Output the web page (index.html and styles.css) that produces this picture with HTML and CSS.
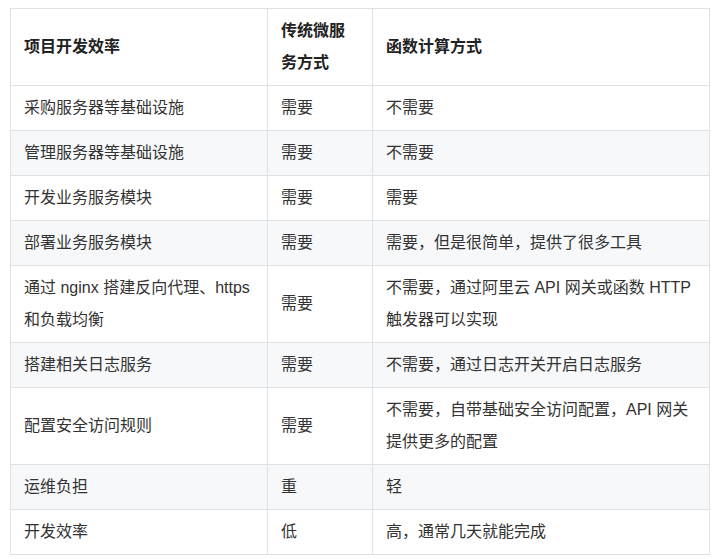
FILE: index.html
```html
<!DOCTYPE html>
<html lang="zh">
<head>
<meta charset="utf-8">
<link rel="stylesheet" href="styles.css">
</head>
<body>
<table class="cmp">
  <colgroup>
    <col class="c1"><col class="c2"><col class="c3">
  </colgroup>
  <thead>
    <tr><th>项目开发效率</th><th>传统微服务方式</th><th>函数计算方式</th></tr>
  </thead>
  <tbody>
    <tr><td>采购服务器等基础设施</td><td>需要</td><td>不需要</td></tr>
    <tr><td>管理服务器等基础设施</td><td>需要</td><td>不需要</td></tr>
    <tr><td>开发业务服务模块</td><td>需要</td><td>需要</td></tr>
    <tr><td>部署业务服务模块</td><td>需要</td><td>需要，但是很简单，提供了很多工具</td></tr>
    <tr><td>通过 nginx 搭建反向代理、https 和负载均衡</td><td>需要</td><td>不需要，通过阿里云 API 网关或函数 HTTP 触发器可以实现</td></tr>
    <tr><td>搭建相关日志服务</td><td>需要</td><td>不需要，通过日志开关开启日志服务</td></tr>
    <tr><td>配置安全访问规则</td><td>需要</td><td>不需要，自带基础安全访问配置，API 网关提供更多的配置</td></tr>
    <tr><td>运维负担</td><td>重</td><td>轻</td></tr>
    <tr><td>开发效率</td><td>低</td><td>高，通常几天就能完成</td></tr>
  </tbody>
</table>
</body>
</html>
```
FILE: styles.css
```css
html, body {
  margin: 0;
  background: #ffffff;
}
body {
  padding: 8px 0 0 10px;
  font-family: "Liberation Sans", "Noto Sans CJK SC", sans-serif;
  font-size: 16px;
  color: #333333;
}
.cmp {
  border-collapse: collapse;
  table-layout: fixed;
  width: 699px;
}
.c1 { width: 257px; }
.c2 { width: 105px; }
.c3 { width: 337px; }
.cmp th,
.cmp td {
  border: 1px solid #dfe2e5;
  padding: 6px 13px;
  line-height: 32px;
  text-align: left;
  vertical-align: middle;
}
.cmp th {
  font-weight: bold;
  color: #222222;
}
.cmp tbody tr:nth-child(even) {
  background: #f6f8fa;
}
```
